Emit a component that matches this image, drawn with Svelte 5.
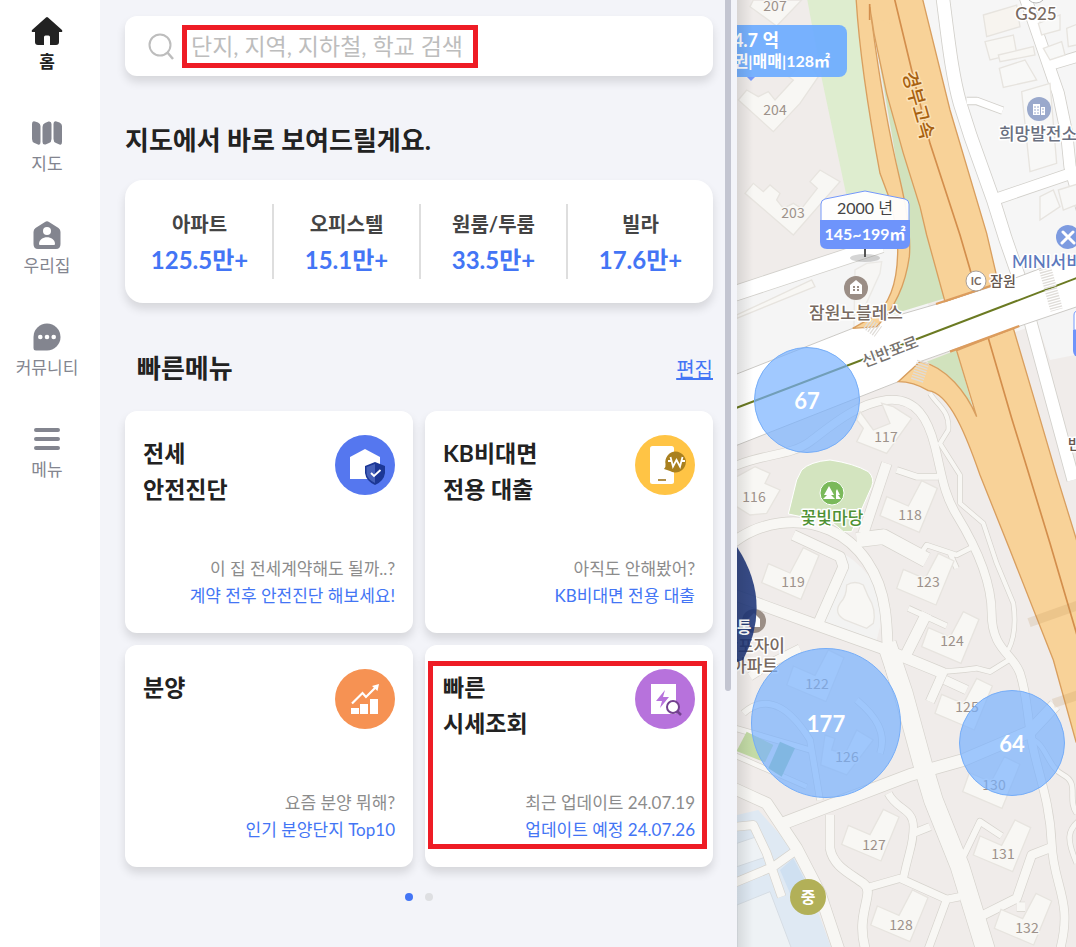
<script>
  let keyword = "";

  const stats = [
    { name: "아파트", count: "125.5만+" },
    { name: "오피스텔", count: "15.1만+" },
    { name: "원룸/투룸", count: "33.5만+" },
    { name: "빌라", count: "17.6만+" },
  ];

  const menus = [
    {
      icon: "safe",
      title: ["전세", "안전진단"],
      desc: "이 집 전세계약해도 될까..?",
      action: "계약 전후 안전진단 해보세요!",
    },
    {
      icon: "loan",
      title: ["KB비대면", "전용 대출"],
      desc: "아직도 안해봤어?",
      action: "KB비대면 전용 대출",
    },
    {
      icon: "sale",
      title: ["분양"],
      desc: "요즘 분양 뭐해?",
      action: "인기 분양단지 Top10",
    },
    {
      icon: "price",
      title: ["빠른", "시세조회"],
      desc: "최근 업데이트 24.07.19",
      action: "업데이트 예정 24.07.26",
      marked: true,
    },
  ];

  const clusters = [
    { count: 67, x: 70, y: 400, size: 106 },
    { count: 177, x: 89, y: 723, size: 150 },
    { count: 64, x: 275, y: 743, size: 106 },
  ];

  // map geometry is drawn at 3 units per pixel
  const cityRoads = [
    { d: "M638-10C655 120 665 220 690 310L722 410 790 600 826 715 880 870", w: 38 },
    { d: "M710 303H740L818 332", w: 20 },
    { d: "M885-10 940 150 985 280 1010 400 1020 500 1060 640", w: 34 },
    { d: "M960 195 1060 165", w: 30 },
    { d: "M795 598 1030 518", w: 32 },
    { d: "M900 960 1030 1440", w: 36 },
    { d: "M0 885 455 735", w: 44 },
  ];

  const estateRoads = [
    { d: "M0 1405C90 1360 180 1370 240 1325S380 1210 470 1200 595 1260 615 1340 640 1480 680 1545 785 1730 785 1840 850 1960 870 2020 890 2130 905 2220 960 2400 965 2530 1030 2700 990 2850", w: 24 },
    { d: "M600 1180C620 1215 660 1230 655 1290L630 1330 690 1425V1510L760 1570 800 1690 850 1810C860 1880 850 1920 835 1950", w: 12 },
    { d: "M0 1635C90 1560 210 1550 300 1590S450 1720 465 1830 460 1960 500 2060", w: 30 },
    { d: "M0 1780 260 1875 470 1950 640 2020", w: 32 },
    { d: "M470 1930 520 2080 580 2300 610 2400 690 2600 770 2860", w: 56 },
    { d: "M380 1620 460 1610 590 1680", w: 44 },
    { d: "M570 1665 590 1635 680 1665 730 1640M660 1660 680 1705", w: 14 },
    { d: "M470 1390 400 1600", w: 30 },
    { d: "M190 1605 330 1670 340 1700 265 1870", w: 30 },
    { d: "M535 1825 650 1878", w: 16 },
    { d: "M590 1840 560 1900 525 1970", w: 32 },
    { d: "M640 2015 700 2010 740 2005 780 2015 845 1975", w: 14 },
    { d: "M640 2015 600 2105M645 2040 710 2070", w: 26 },
    { d: "M500 1410 560 1430 625 1430", w: 18 },
    { d: "M160 2470 540 2325 700 2280 900 2195 975 2115", w: 36 },
    { d: "M0 2360 110 2410 200 2545 270 2680 330 2860", w: 34 },
    { d: "M300 2445V2545C310 2600 360 2620 400 2650S370 2740 410 2860", w: 26 },
    { d: "M405 2665 510 2635 650 2698 690 2690M650 2698 590 2860", w: 22 },
    { d: "M475 2380C500 2430 550 2425 550 2480S540 2540 520 2635M550 2500 600 2480", w: 22 },
    { d: "M690 2590 750 2465 815 2508", w: 18 },
    { d: "M750 2750 860 2695 905 2565 970 2540M860 2720H885", w: 26 },
    { d: "M900 2215C950 2230 950 2300 1000 2325S1010 2400 1040 2440M1050 2460C1010 2490 1010 2520 1040 2590", w: 14 },
    { d: "M0 2260 230 2360", w: 14 },
    { d: "M40 2140C120 2070 190 2140 240 2220L270 2400M380 2100C440 2150 470 2200 450 2260", w: 18 },
    { d: "M0 2180 240 2250", w: 16 },
    { d: "M60 2030 120 1990 210 1945", w: 24 },
    { d: "M10 2650 130 2600 200 2550M20 2480 70 2475 110 2560 155 2690", w: 24 },
  ];

  // L shaped towers
  const towers = [
    [450, 1442], [95, 1643], [500, 1660], [575, 1835], [615, 2035],
    [170, 1950], [335, 2428], [422, 2670], [730, 2460], [793, 2680],
    [698, 2270],
  ];

  const buildingLabels = [
    { n: 207, x: 775, y: 11 }, { n: 204, x: 775, y: 115 }, { n: 203, x: 793, y: 218 },
    { n: 117, x: 886, y: 442 }, { n: 116, x: 754, y: 502 }, { n: 118, x: 910, y: 520 },
    { n: 119, x: 793, y: 587 }, { n: 123, x: 928, y: 587 }, { n: 124, x: 952, y: 646 },
    { n: 122, x: 817, y: 689 }, { n: 125, x: 967, y: 712 }, { n: 126, x: 847, y: 762 },
    { n: 130, x: 994, y: 790 }, { n: 127, x: 874, y: 850 }, { n: 131, x: 1003, y: 859 },
    { n: 128, x: 901, y: 930 }, { n: 132, x: 1027, y: 933 },
  ];
</script>

<div class="page">
  <nav class="side">
    <a href="#home" class="active">
      <svg width="32" height="32" viewBox="0 0 32 32"><path d="M15 2.500Q16 1.500 17 2.500L31 15Q32 17 30 17H28V27Q28 30 25 30H19V22Q19 20.500 17.500 20.500H14.500Q13 20.500 13 22V30H7Q4 30 4 27V17H2Q0 17 1 15Z" /></svg>
      <span>홈</span>
    </a>
    <a href="#map">
      <svg width="32" height="32" viewBox="0 0 32 32"><path d="M1 7Q1 3.500 4 4.500L7 5.500Q9.500 6.500 9.500 9V25Q9.500 28.500 7 27.500L3.500 26Q1 25 1 22ZM11.500 10Q11.500 7 14 6L17.500 4.500Q20.500 4 20.500 7V22Q20.500 25 18 26L14.500 27.500Q11.500 28 11.500 25ZM22.500 7Q22.500 3.500 25.500 4.500L28.500 5.500Q31 6.500 31 9V25Q31 28.500 28.500 27.500L25 26Q22.500 25 22.500 22Z" /></svg>
      <span>지도</span>
    </a>
    <a href="#myhome">
      <svg width="32" height="32" viewBox="0 0 32 32"><path d="M14 3Q16 1.500 18 3L27.500 9Q29.500 10.500 29.500 13V25Q29.500 30 25 30H7Q2.500 30 2.500 25V13Q2.500 10.500 4.500 9Z" /><circle cx="16" cy="12" r="4" fill="#fff" /><path d="M8 25C8 16 24 16 24 25Q24 26 23 26H9Q8 26 8 25Z" fill="#fff" /></svg>
      <span>우리집</span>
    </a>
    <a href="#community">
      <svg width="32" height="32" viewBox="0 0 32 32"><path d="M2.500 16A13.500 13.500 0 1 1 16 29.500H5Q2.500 29.500 2.500 27Z" /><g fill="#fff"><circle cx="9.300" cy="16" r="2.300" /><circle cx="16" cy="16" r="2.300" /><circle cx="22.700" cy="16" r="2.300" /></g></svg>
      <span>커뮤니티</span>
    </a>
    <a href="#menu">
      <svg width="32" height="32" viewBox="0 0 32 32"><path d="M5 7H27M5 16H27M5 25H27" stroke="#83858f" stroke-width="4" stroke-linecap="round" /></svg>
      <span>메뉴</span>
    </a>
  </nav>

  <main class="panel">
    <form class="search">
      <svg width="28" height="28" viewBox="0 0 28 28" fill="none" stroke="#bdbdbd" stroke-width="2"><circle cx="13" cy="13" r="10.500" /><path d="M20 20 26 27" stroke-width="2.500" /></svg>
      <input
        type="text"
        aria-label="단지, 지역, 지하철, 학교 검색"
        placeholder="단지, 지역, 지하철, 학교 검색"
        bind:value={keyword}
      />
    </form>

    <h2>지도에서 바로 보여드릴게요.</h2>
    <div class="stats">
      {#each stats as stat}
        <a href="#map" class="stat">
          <span>{stat.name}</span>
          <strong>{stat.count}</strong>
        </a>
      {/each}
    </div>

    <div class="quickHead">
      <h2>빠른메뉴</h2>
      <a href="#edit">편집</a>
    </div>
    <div class="cards">
      {#each menus as menu}
        <a href="#{menu.icon}" class="card" class:marked={menu.marked}>
          <div class="cardTop">
            <h3>{#each menu.title as line}<span>{line}</span>{/each}</h3>
            <svg width="60" height="60" viewBox="0 0 60 60">
              {#if menu.icon == "safe"}
                <circle cx="30" cy="30" r="30" fill="#5577ef" />
                <path d="M15 22 30 14 45 22V44H15Z" fill="#fff" />
                <path d="M40 27 50 31V38Q49 46 40 50 31 46 30 38V31Z" fill="#1c3795" />
                <path d="M40 29V48Q32 44 31.500 38V32Z" fill="#4560b9" />
                <path d="M36 38 39 41 45.500 35" fill="none" stroke="#fff" stroke-width="1.800" />
              {:else if menu.icon == "loan"}
                <circle cx="30" cy="30" r="30" fill="#ffc445" />
                <rect x="15" y="11" width="24" height="38" rx="2.500" fill="#fff" />
                <path d="M23 45H31" stroke="#b0904a" stroke-width="2" />
                <path d="M40.500 16.500A10.500 10.500 0 1 1 35 36Q32 35 29 34 31 32 30.500 29A10.500 10.500 0 0 1 40.500 16.500Z" fill="#a9801f" />
                <path d="M35.500 22 38 31.500 41.500 25 45 31.500 47.500 22M33 26H37M46 26H50" fill="none" stroke="#fff" stroke-width="1.800" />
              {:else if menu.icon == "sale"}
                <circle cx="30" cy="30" r="30" fill="#f69253" />
                <path d="M16 39H24V45H16ZM25 35H33V45H25ZM35 30H43V45H35Z" fill="#fff" />
                <path d="M17 34.500 27.500 24 31 28 41 18" fill="none" stroke="#fff" stroke-width="2.200" />
                <path d="M37 17 44 15 42.500 22Z" fill="#fff" />
              {:else}
                <circle cx="30" cy="30" r="30" fill="#b772dc" />
                <path d="M16 15H41V45H16Z" fill="#fff" />
                <path d="M30 21 21 32H27L25 39 34 28H28Z" fill="#b772dc" />
                <circle cx="38" cy="38" r="6" fill="#fff" stroke="#73418f" stroke-width="2" />
                <path d="M42 42 46 46" stroke="#73418f" stroke-width="2.500" />
              {/if}
            </svg>
          </div>
          <p>{menu.desc}<em>{menu.action}</em></p>
        </a>
      {/each}
    </div>
    <div class="dots">
      <button class="on" aria-label="1"></button>
      <button aria-label="2"></button>
    </div>
    <div class="scrollbar"></div>
  </main>

  <section class="map">
    <svg class="ground" width="100%" height="100%">
      <defs>
        <linearGradient id="edge">
          <stop offset="0" stop-opacity=".1" />
          <stop offset="1" stop-opacity="0" />
        </linearGradient>
      </defs>
      <g transform="translate(-7 0) scale(.33333)">
        <path d="M0 0H480L560 900 0 1120Z" fill="#f0ecea" />
        <path d="M0 880 440 730 560 740 600 940 0 1130Z" fill="#f5f5f5" />
        <path d="M560 0H2000V1000L700 1050Z" fill="#f6f6f6" />
        <path d="M0 1300 900 980 2000 700V4000H0Z" fill="#f0ecea" />
        <path d="M920 965 1060 915V1060L960 1080Z" fill="#f5f5f5" />
        <path d="M232 0H400L500 745H385L350 590 275 235Z" fill="#deedcf" />
        <path d="M430 80 645 895 480 945 540 750 490 430Z" fill="#d1e2bd" />
        <path d="M21 2445 85 2430 200 2560 310 2860H21Z" fill="#dfe9f3" />
        <path d="M21 2530 95 2505 110 2570 21 2600ZM21 2715 120 2675 190 2860H21Z" fill="#eef2f5" stroke="#d6dde4" stroke-width="3" />
        <path d="M150 2610 190 2575 235 2660 180 2680Z" fill="#cfe0f1" />
        <path d="M340 1660Q470 1740 450 1880L435 1940 280 1865Z" fill="#f3f3f2" />

        <g fill="none" stroke-linejoin="round">
          {#each cityRoads as road}
            <path d={road.d} stroke="#d2d0cb" stroke-width={road.w + 5} />
          {/each}
          {#each cityRoads as road}
            <path d={road.d} stroke="#fff" stroke-width={road.w} />
          {/each}
          {#each estateRoads as road}
            <path d={road.d} stroke="#d6d3cd" stroke-width={road.w + 4} />
          {/each}
          {#each estateRoads as road}
            <path d={road.d} stroke="#f8f7f4" stroke-width={road.w} />
          {/each}
        </g>

        <g fill="#f8f7f4" stroke="#e7e4df" stroke-width="4">
          <path d="M70 0 60 20 140 78 215 0Z" />
          <path d="M25 300 50 270 85 290 115 275 135 300 190 240 175 230 230 180 265 230 210 310 130 395Z" />
          <path d="M45 580 70 550 100 575 120 555 150 580 140 600 160 625 190 610 215 625 262 565 240 545 270 510 330 545 190 705Z" />
          <path d="M390 1235 430 1290 480 1270 455 1210 490 1220 545 1255 470 1360 380 1325 400 1285 380 1260Z" />
          <path d="M75 1400 120 1420 105 1450 150 1470 110 1540 60 1545 20 1520V1430Z" />
          <path d="M350 1755Q375 1740 400 1755L415 1790Q440 1830 430 1870L410 1885 345 1860Q310 1840 330 1810 350 1790 350 1755Z" />
          <path d="M370 1080 375 810 410 790 455 785 450 820 400 930Z" opacity=".7" />
          <path d="M285 2205 315 2215 305 2250 345 2262 380 2190 430 2220 350 2325 272 2295Z" />
          <path d="M760 45 860 15 870 80 770 110Z" fill="#f7f4ef" />
          <path d="M765 125 850 105 860 160 780 180Z" />
          <path d="M805 165 910 140 915 165 810 185Z" />
          <path d="M808 205 885 180 920 240 820 262ZM875 275 960 250 980 490 900 515ZM930 590 970 570 990 620 930 660ZM985 570 1050 550V610L1000 630Z" fill="#f8f8f7" />
          <path d="M925 70 990 45V90L935 105ZM940 145 995 125 1005 165 960 180ZM1010 85 1060 65V130L1015 140Z" fill="#f8f8f7" />
          <path d="M20 945 245 840 255 860 20 955Z" />
          {#each towers as [x, y]}
            <path transform="translate({x} {y})" d="M20 48 85 76 125 0 172 23 118 155 0 105Z" />
          {/each}
        </g>
        <path d="M215 1410Q240 1385 300 1380 370 1390 415 1415 435 1435 425 1460L365 1595H340L310 1570 175 1542 200 1440Z" fill="#d3e4bf" stroke="#fff" stroke-width="3" />
        <path d="M50 2195 130 2235 105 2287 20 2253Z" fill="#c3dba6" />
        <path d="M150 2225 195 2245 155 2330 115 2305Z" fill="#9cc7a5" />

        <path d="M0 1130 368 985 645 905 800 855 1900 440V630L870 978 570 1085 505 1145 0 1344Z" fill="#fff" stroke="#cbc9c5" stroke-width="3" />
        <path d="M590 1085 680 1050 733 1240Q680 1130 590 1085Z" fill="#d1e2bd" />
        <g fill="#f8d298" stroke="#d99f5f" stroke-width="4">
          <path d="M378-10Q390 200 450 520L480 600Q505 700 503 760 500 900 430 950L368 985 440 980Q520 900 538 770 545 690 510 540 460 330 425 60L425-10Z" />
          <path d="M415-10 432 100 470 280 520 460 570 620 590 705 645 905 805 850 770 700 660 330 576-10Z" />
          <path d="M680 1052 850 985 915 1205 978 1420 1200 2140V2600L1038 2225 970 1980 840 1650 750 1425C710 1310 660 1180 595 1172Q550 1145 505 1145L570 1085C650 1100 710 1180 740 1250Z" />
        </g>
        <path d="M384-10H480V70L426 50 424 20H388Z" fill="#f8d298" />
        <path d="M419 12V60M492-10 545 210 600 430 690 705 725 825M775 1015 845 1255 890 1400 960 1630 1060 1970" fill="none" stroke="#d38e4c" stroke-width="5" />
        <path d="M618 912 790 855M660 1055 868 978" stroke="#dc9c5d" stroke-width="7" />
        <path d="M897 1868 1060 1810M970 2110 1060 2080" stroke="#b78c52" stroke-opacity=".18" stroke-width="28" />
        <path d="M0 1231 1900 506" stroke="#6b7a22" stroke-width="6" />
        <path d="M410 970 445 995M945 805 980 930M580 1085 560 1145" stroke="#dfdcd8" stroke-width="38" stroke-dasharray="4 4" />
      </g>

      <g class="labels" transform="translate(-737 0)" text-anchor="middle">
        {#each buildingLabels as label}
          <text x={label.x} y={label.y} class="num">{label.n}</text>
        {/each}
        <text x="1036" y="20" class="place">GS25</text>
        <circle cx="1036" cy="-7" r="10" fill="#fff" stroke="#bbb" />
        <text x="1038" y="140" class="place slate">희망발전소</text>
        <circle cx="1039" cy="109" r="12" fill="#9aa9cc" />
        <path d="M1033 104H1040V115H1033ZM1041 107H1045V115H1041Z" fill="#fff" />
        <path d="M1035 106V114M1038 106V114M1043 108V114" stroke="#9aa9cc" stroke-dasharray="2 1" />
        <text x="1012" y="268" class="place blue start">MINI서비스</text>
        <circle cx="1068" cy="237" r="12" fill="#7d9be0" />
        <path d="M1063 232 1074 243M1073 232 1062 243" stroke="#fff" stroke-width="3" stroke-linecap="round" />
        <circle cx="976" cy="281" r="10" fill="#fff" stroke="#aaa19b" />
        <text x="976" y="285" class="ic">IC</text>
        <text x="1003" y="286" class="small">잠원</text>
        <text x="856" y="319" class="place">잠원노블레스</text>
        <circle cx="856" cy="288" r="12" fill="#9b8e86" />
        <path d="M850 285 856 280 862 285V294H850Z" fill="#fff" />
        <path d="M854 286V291M858 286V291" stroke="#9b8e86" stroke-width="2" stroke-dasharray="2 1" />
        <circle cx="832" cy="493" r="12" fill="#7ab95b" stroke="#fff" />
        <path d="M829 486 834 495H831L835 499H823L827 495H824ZM837 489 840 495H838L841 499H836V491Z" fill="#fff" />
        <text x="832" y="524" class="place green">꽃빛마당</text>
        <circle cx="754" cy="621" r="12" fill="#9b8e86" />
        <path d="M748 619 754 613 760 619V627H748Z" fill="#fff" />
        <text x="785" y="652" class="place end">반포자이</text>
        <text x="778" y="672" class="place end">아파트</text>
        <text class="highway" transform="translate(912 107) rotate(74)">경부고속</text>
        <text class="street" transform="translate(892 357) rotate(-21)">신반포로</text>
        <text x="1068" y="449" class="small start">반</text>
      </g>

      <g class="labels markers" transform="translate(-737 0)" text-anchor="middle">
        <path d="M737 547Q773 602 743 660L737 662Z" fill="#1c3478" fill-opacity=".88" />
        <text x="744" y="633" class="white">통</text>
        <rect x="700" y="25" width="147" height="52" rx="8" fill="#6eadff" fill-opacity=".94" />
        <path d="M747 77H755L751 81Z" fill="#7498fb" />
        <text x="779" y="47" class="white big end">4.7 억</text>
        <text x="830" y="67" class="white end">양권|매매|128㎡</text>
        <ellipse cx="865" cy="258" rx="15" ry="4" fill="#888" opacity=".35" />
        <path d="M865 247V257" stroke="#555" stroke-width="2" />
        <path d="M821 222V204Q821 200 825 199L865 191 905 199Q909 200 909 204V222Z" fill="#fff" fill-opacity=".93" stroke="#7498fb" />
        <path d="M820 220H910V242Q910 249 903 249H827Q820 249 820 242Z" fill="#6e94fb" />
        <text x="865" y="214" class="year">2000 년</text>
        <text x="865" y="240" class="white">145~199㎡</text>
        <path d="M1074 330V315Q1074 311 1079 310H1120V330Z" fill="#fff" stroke="#7498fb" />
        <path d="M1073 330H1120V357H1080Q1073 357 1073 350Z" fill="#6e94fb" />
        <circle cx="808" cy="897" r="18" fill="#b2b058" />
        <text x="808" y="903" class="white">중</text>
      </g>
      <rect width="16" height="100%" fill="url(#edge)" />
    </svg>
    {#each clusters as c}
      <button class="cluster" style="left: {c.x}px; top: {c.y}px; width: {c.size}px; height: {c.size}px">{c.count}</button>
    {/each}
  </section>
</div>

<style>
  :global(body) {
    font-family: Lato, "Noto Sans CJK KR", sans-serif;
    color: #222;
  }
  h2, h3, p {
    margin: 0;
  }
  a {
    color: inherit;
    text-decoration: none;
  }
  button, input {
    font-family: inherit;
  }
  .page {
    display: grid;
    grid-template-columns: 100px minmax(480px, 637px) minmax(0, 1fr);
    min-height: 100vh;
  }
  .side {
    display: flex;
    flex-direction: column;
    gap: 42px;
    padding: 15px 6px 0 0;
    background: #fff;
  }
  .side a {
    display: flex;
    flex-direction: column;
    align-items: center;
    gap: 2px;
    font-size: 17px;
    line-height: 26px;
    font-weight: 400;
    color: #83858f;
    fill: #83858f;
  }
  .side a.active {
    color: #222;
    fill: #222;
    font-weight: 700;
  }
  .panel {
    position: relative;
    box-sizing: border-box;
    padding: 16px 24px 24px 25px;
    background: #f3f4f9;
  }
  .search {
    display: flex;
    align-items: center;
    gap: 7px;
    height: 60px;
    padding-left: 22px;
    border-radius: 12px;
    background: #fff;
    box-shadow: 0 6px 10px rgba(0, 0, 0, 0.12);
  }
  .search input {
    flex: 0 1 296px;
    box-sizing: border-box;
    min-width: 0;
    height: 43px;
    padding: 0 4px;
    border: 5px solid #ee1c25;
    outline: none;
    background: #fff;
    font-size: 23px;
    color: #222;
  }
  .search input::placeholder {
    color: #bdbdbd;
  }
  h2 {
    font-size: 26px;
    line-height: 40px;
    font-weight: 700;
  }
  .search + h2 {
    margin: 44px 0 20px;
  }
  .stats {
    display: grid;
    grid-template-columns: repeat(4, 1fr);
    padding: 24px 0;
    border-radius: 18px;
    background: #fff;
    box-shadow: 0 6px 10px rgba(0, 0, 0, 0.12);
  }
  .stat {
    display: flex;
    flex-direction: column;
    align-items: center;
    height: 75px;
    border-left: 2px solid #dedede;
  }
  .stat:first-child {
    border-left-color: transparent;
  }
  .stat span {
    font-size: 20px;
    line-height: 40px;
    font-weight: 700;
    color: #444;
  }
  .stat strong {
    font-size: 24px;
    line-height: 32px;
    color: #4375f5;
  }
  .quickHead {
    display: flex;
    justify-content: space-between;
    align-items: center;
    margin: 45px 0 23px;
    padding-left: 12px;
  }
  .quickHead a {
    font-size: 20px;
    color: #4375f5;
    text-decoration: underline;
  }
  .cards {
    display: grid;
    grid-template-columns: repeat(2, 1fr);
    gap: 12px;
  }
  .card {
    position: relative;
    display: flex;
    flex-direction: column;
    justify-content: space-between;
    box-sizing: border-box;
    min-height: 222px;
    padding: 24px 18px;
    border-radius: 12px;
    background: #fff;
    box-shadow: 0 6px 10px rgba(0, 0, 0, 0.12);
  }
  .marked::after {
    content: "";
    position: absolute;
    inset: 16px 6px 18px 3px;
    border: 5px solid #ee1c25;
  }
  .cardTop {
    display: flex;
    justify-content: space-between;
  }
  h3 {
    font-size: 23px;
    line-height: 36px;
    font-weight: 700;
  }
  h3 span {
    display: block;
  }
  .card p {
    text-align: right;
    font-size: 17px;
    line-height: 27px;
    color: #8c8c8c;
  }
  .card em {
    display: block;
    font-style: normal;
    color: #4375f5;
  }
  .dots {
    display: flex;
    justify-content: center;
    gap: 12px;
    margin-top: 26px;
  }
  .dots button {
    width: 8px;
    height: 8px;
    padding: 0;
    border: none;
    border-radius: 50%;
    background: #dedfe2;
  }
  .dots button.on {
    background: #4375f5;
  }
  .scrollbar {
    position: absolute;
    top: 0;
    right: 6px;
    width: 6px;
    height: 73%;
    border-radius: 0 0 3px 3px;
    background: #c3c5d1;
  }
  .map {
    position: relative;
    overflow: hidden;
    background: #f0ecea;
  }
  .ground {
    position: absolute;
    inset: 0;
  }
  .labels {
    fill: #786a61;
    font-size: 17px;
    font-weight: 500;
    stroke: none;
  }
  .labels text {
    paint-order: stroke;
    stroke: #fff;
    stroke-width: 3px;
    stroke-linejoin: round;
  }
  .labels .num {
    font-family: "Noto Sans CJK KR", sans-serif;
    font-size: 14px;
    font-weight: 400;
    fill: #9d928b;
    stroke: #f8f7f4;
  }
  .labels .slate {
    fill: #6a7080;
  }
  .labels .blue {
    fill: #5c79bd;
  }
  .labels .green {
    fill: #4e9134;
  }
  .labels .start {
    text-anchor: start;
  }
  .labels .end {
    text-anchor: end;
  }
  .labels .small {
    font-size: 14px;
    fill: #65564e;
  }
  .labels .ic {
    font-size: 11px;
    font-weight: 700;
  }
  .labels .highway {
    font-size: 19px;
    fill: #a7600f;
    stroke: #fbe2b8;
  }
  .labels .street {
    font-size: 16px;
    fill: #77736f;
  }
  .markers text {
    stroke: none;
  }
  .markers .white {
    font-size: 16px;
    font-weight: 700;
    fill: #fff;
  }
  .markers .big {
    font-size: 18px;
  }
  .markers .year {
    font-size: 16px;
    font-weight: 400;
    fill: #444;
  }
  .cluster {
    position: absolute;
    transform: translate(-50%, -50%);
    padding: 0;
    border: 1px solid #75adf8;
    border-radius: 50%;
    background: rgba(116, 176, 255, 0.68);
    color: #fff;
    font-size: 22px;
    font-weight: 700;
  }
</style>
